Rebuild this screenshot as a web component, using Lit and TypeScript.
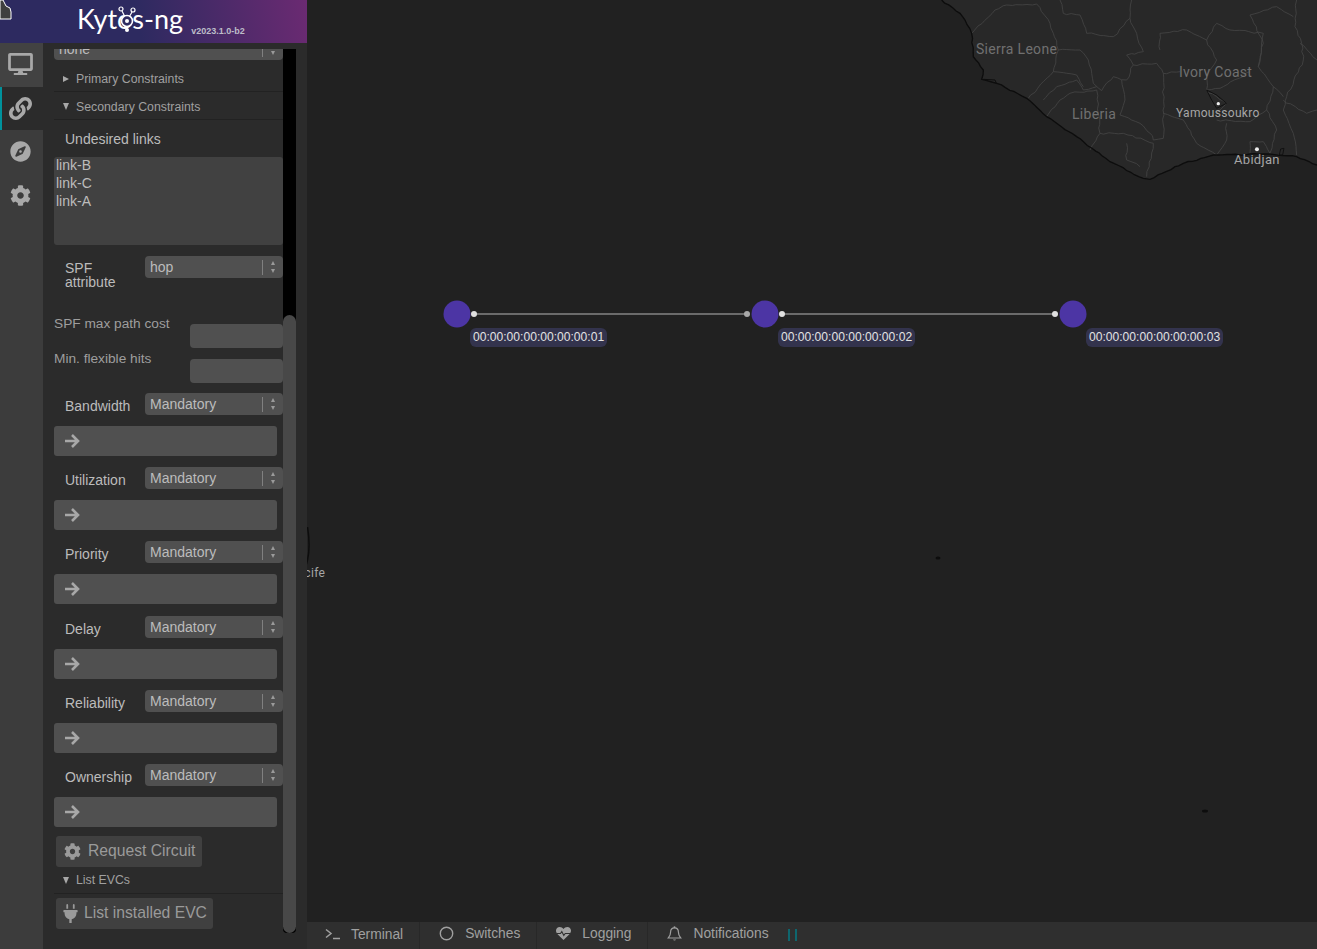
import { LitElement, html, svg, css } from "lit";
import { customElement } from "lit/decorators.js";

const ICONS = {
  desktop: {
    box: "0 0 576 512",
    d: "M528 0H48C21.5 0 0 21.5 0 48v320c0 26.5 21.5 48 48 48h192l-16 48h-72c-13.3 0-24 10.7-24 24s10.7 24 24 24h272c13.3 0 24-10.7 24-24s-10.7-24-24-24h-72l-16-48h192c26.5 0 48-21.5 48-48V48c0-26.5-21.5-48-48-48zm-16 352H64V64h448v288z",
  },
  link: {
    box: "0 0 512 512",
    d: "M326.612 185.391c59.747 59.809 58.927 155.698.36 214.59-.11.12-.24.25-.36.37l-67.2 67.2c-59.27 59.27-155.699 59.262-214.96 0-59.27-59.26-59.27-155.7 0-214.96l37.106-37.106c9.84-9.84 26.786-3.3 27.294 10.606.648 17.722 3.826 35.527 9.69 52.721 1.986 5.822.567 12.262-3.783 16.612l-13.087 13.087c-28.026 28.026-28.905 73.66-1.155 101.96 28.024 28.579 74.086 28.749 102.325.51l67.2-67.19c28.191-28.191 28.073-73.757 0-101.83-3.701-3.694-7.429-6.564-10.341-8.569a16.037 16.037 0 0 1-6.947-12.606c-.396-10.567 3.348-21.456 11.698-29.806l21.054-21.055c5.521-5.521 14.182-6.199 20.584-1.731a152.482 152.482 0 0 1 20.522 17.197zM467.547 44.449c-59.261-59.262-155.69-59.27-214.96 0l-67.2 67.2c-.12.12-.25.25-.36.37-58.566 58.892-59.387 154.781.36 214.59a152.454 152.454 0 0 0 20.521 17.196c6.402 4.468 15.064 3.789 20.584-1.731l21.054-21.055c8.35-8.35 12.094-19.239 11.698-29.806a16.037 16.037 0 0 0-6.947-12.606c-2.912-2.005-6.64-4.875-10.341-8.569-28.073-28.073-28.191-73.639 0-101.83l67.2-67.19c28.239-28.239 74.3-28.069 102.325.51 27.75 28.3 26.872 73.934-1.155 101.96l-13.087 13.087c-4.35 4.35-5.769 10.79-3.783 16.612 5.864 17.194 9.042 34.999 9.69 52.721.509 13.906 17.454 20.446 27.294 10.606l37.106-37.106c59.271-59.259 59.271-155.699.001-214.959z",
  },
  compass: {
    box: "0 0 496 512",
    d: "M225.38 233.37c-12.5 12.5-12.5 32.76 0 45.25 12.49 12.5 32.76 12.5 45.25 0 12.5-12.5 12.5-32.76 0-45.25-12.5-12.49-32.76-12.49-45.25 0zM248 8C111.03 8 0 119.03 0 256s111.03 248 248 248 248-111.03 248-248S384.97 8 248 8zm126.14 148.05L308.17 300.4a31.938 31.938 0 0 1-15.77 15.77l-144.34 65.97c-16.65 7.61-33.81-9.55-26.2-26.2l65.98-144.35a31.938 31.938 0 0 1 15.77-15.77l144.34-65.97c16.65-7.6 33.8 9.55 26.19 26.2z",
  },
  cog: {
    box: "0 0 512 512",
    d: "M487.4 315.7l-42.6-24.6c4.3-23.2 4.3-47 0-70.2l42.6-24.6c4.9-2.8 7.1-8.6 5.5-14-11.1-35.6-30-67.8-54.7-94.6-3.8-4.1-10-5.1-14.8-2.3L380.8 110c-17.9-15.4-38.5-27.3-60.8-35.1V25.8c0-5.6-3.9-10.5-9.4-11.7-36.7-8.2-74.3-7.8-109.2 0-5.5 1.2-9.4 6.1-9.4 11.7V75c-22.2 7.9-42.8 19.8-60.8 35.1L88.7 85.5c-4.9-2.8-11-1.9-14.8 2.3-24.7 26.7-43.6 58.9-54.7 94.6-1.7 5.4.6 11.2 5.5 14L67.3 221c-4.3 23.2-4.3 47 0 70.2l-42.6 24.6c-4.9 2.8-7.1 8.6-5.5 14 11.1 35.6 30 67.8 54.7 94.6 3.8 4.1 10 5.1 14.8 2.3l42.6-24.6c17.9 15.4 38.5 27.3 60.8 35.1v49.2c0 5.6 3.9 10.5 9.4 11.7 36.7 8.2 74.3 7.8 109.2 0 5.5-1.2 9.4-6.1 9.4-11.7v-49.2c22.2-7.9 42.8-19.8 60.8-35.1l42.6 24.6c4.9 2.8 11 1.9 14.8-2.3 24.7-26.7 43.6-58.9 54.7-94.6 1.5-5.5-.7-11.3-5.6-14.1zM256 336c-44.1 0-80-35.9-80-80s35.9-80 80-80 80 35.9 80 80-35.9 80-80 80z",
  },
  plug: {
    box: "0 0 384 512",
    d: "M256 24c0-13 11-24 24-24s24 11 24 24v104h-48zM80 24C80 11 91 0 104 0s24 11 24 24v104H80zM16 160h352c9 0 16 7 16 16v32c0 9-7 16-16 16h-16v32c0 77-55 142-128 157v99h-64v-99C87 398 32 333 32 256v-32H16c-9 0-16-7-16-16v-32c0-9 7-16 16-16z",
  },
};

const icon = (name: keyof typeof ICONS, cls = "") =>
  html`<svg class="ico ${cls}" viewBox=${ICONS[name].box}>
    <path d=${ICONS[name].d} fill="currentColor"></path>
  </svg>`;

const arrow = html`<svg class="arrow" viewBox="0 0 16 16">
  <path
    d="M1.5 8H14M8.5 2l6 6-6 6"
    fill="none"
    stroke="currentColor"
    stroke-width="2.6"
  ></path>
</svg>`;

const terminalIcon = html`<svg class="tab-ico" viewBox="0 0 15 15">
  <path
    d="M1 3.5 6 7.5 1 11.5M8 12.5h7"
    fill="none"
    stroke="currentColor"
    stroke-width="1.5"
  ></path>
</svg>`;

const circleIcon = html`<svg class="tab-ico" viewBox="0 0 15 15">
  <circle cx="7.5" cy="7.5" r="6.2" fill="none" stroke="currentColor" stroke-width="1.4"></circle>
</svg>`;

const heartIcon = html`<svg class="tab-ico" viewBox="0 0 15 15">
  <path
    d="M7.5 14 1.8 8.4C.3 6.9 0 5.8 0 4.6 0 2.5 1.6 1 3.7 1c1.6 0 3 .8 3.8 2.1C8.300 1.800 9.700 1 11.300 1 13.400 1 15 2.500 15 4.600c0 1.200-.3 2.300-1.800 3.800z"
    fill="currentColor"
  ></path>
  <path d="M1 7.500h3.500l1.300-2 2 4 1.400-2h4.800" fill="none" stroke="#2f2f2f" stroke-width="1.100"></path>
</svg>`;

const bellIcon = html`<svg class="tab-ico" viewBox="0 0 15 15">
  <path
    d="M7.500 1.800c-2.600 0-3.900 2-3.900 4.200 0 3.300-1 4.600-2.300 6h12.400c-1.300-1.400-2.300-2.700-2.300-6 0-2.200-1.300-4.200-3.900-4.200z"
    fill="none"
    stroke="currentColor"
    stroke-width="1.200"
  ></path>
  <circle cx="7.500" cy="1.200" r="1" fill="currentColor"></circle>
  <path d="M6 13.600a1.600 1.400 0 0 0 3 0" fill="currentColor"></path>
</svg>`;

const METRICS = [
  "Bandwidth",
  "Utilization",
  "Priority",
  "Delay",
  "Reliability",
  "Ownership",
];

const NODES = [
  { x: 150, y: 314, name: "00:00:00:00:00:00:00:01" },
  { x: 458, y: 314, name: "00:00:00:00:00:00:00:02" },
  { x: 766, y: 314, name: "00:00:00:00:00:00:00:03" },
];

const COAST =
  "M35 0 90 40 105 60 125 100 130 170 160 210 155 238 200 250 290 295 350 350 440 410 540 485 640 535 660 538 760 490 850 465 1000 462 1100 470 1161 495";

// traced off the map tiles, in 3x crop coordinates
const BORDERS = [
  "M125 100 195 30 230 15 320 12 360 70 370 100 385 150 450 150 475 180 490 250 515 272 550 230 590 240 610 195 590 165 640 155 620 100 600 55 605 0",
  "M385 150 370 215 340 245 295 295",
  "M610 195 680 190 700 220 700 415 670 420 660 400 630 370 570 345 585 300 575 240",
  "M1100 0 1095 80 1115 130 1120 180 1070 290 1060 330 1090 400 1100 465",
  "M700 220 750 215M960 45 1040 20 1090 50M960 45 1000 130 985 200 1030 260 1060 290",
  "M690 150 690 100 770 90 830 120 860 70 900 90 1000 100 985 200",
  "M830 120 860 180 830 225 830 270 880 260 960 215",
  "M830 270 860 290 890 310 860 340M700 340 760 360 800 430 860 465",
  "M860 360 960 365 1010 330 1030 260M1010 330 1040 390 1020 460",
  "M890 370 890 420 860 465M960 460 960 425 1000 425 1020 460",
  "M400 40 450 45 470 100 550 110 600 55M390 0 400 40",
  "M340 300 380 260 440 240 460 270 500 260M370 215 440 225 460 260",
  "M350 350 390 300 420 280 500 270 510 400 480 450",
  "M510 400 580 400 670 430 650 530M590 430 590 480 630 500",
  "M1060 300 1130 340 1161 330M1110 130 1161 180",
];

// borders on the tiles are wiggly, so break the long straight runs up a bit
function roughen(d: string, amount = 3) {
  let seed = 7;
  const rnd = () => {
    seed = (seed * 16807) % 2147483647;
    return (seed / 2147483647 - 0.5) * 2 * amount;
  };
  return d
    .split("M")
    .filter(Boolean)
    .map((part) => {
      const n = part.trim().split(/\s+/).map(Number);
      let out = `M${n[0]} ${n[1]}`;
      for (let i = 2; i + 1 < n.length; i += 2) {
        const dx = n[i] - n[i - 2];
        const dy = n[i + 1] - n[i - 1];
        const steps = Math.max(1, Math.round(Math.hypot(dx, dy) / 14));
        for (let s = 1; s <= steps; s++) {
          const t = s / steps;
          const j = s === steps ? 0 : 1;
          out += ` ${(n[i - 2] + dx * t + j * rnd()).toFixed(1)} ${(n[i - 1] + dy * t + j * rnd()).toFixed(1)}`;
        }
      }
      return out;
    })
    .join("");
}

@customElement("app-root")
export class AppRoot extends LitElement {
  static styles = css`
    :host {
      display: block;
      font-family: "Liberation Sans", Arial, sans-serif;
      color: #b4b4b4;
    }

    .page {
      display: grid;
      grid-template-columns: 307px 1fr;
      height: 949px;
      overflow: hidden;
      background: #212121;
    }

    .left {
      display: flex;
      flex-direction: column;
      min-height: 0;
      background: #2b2b2b;
    }

    .brand {
      position: relative;
      height: 43px;
      flex: none;
      display: flex;
      align-items: flex-start;
      padding-left: 77px;
      background: linear-gradient(80deg, #2d2a60 45%, #6b2a72 100%);
    }

    .logo {
      font-family: Lato, sans-serif;
      font-weight: 400;
      font-size: 27px;
      line-height: 38px;
      color: #fff;
    }

    .logo-nodes {
      position: absolute;
      left: 115px;
      top: 4px;
      width: 24px;
      height: 30px;
    }

    .version {
      font-size: 9px;
      font-weight: bold;
      color: #bdbdc8;
      margin: 26px 0 0 8px;
    }

    .cursor {
      position: absolute;
      left: 0;
      top: 0;
      width: 12px;
      height: 20px;
    }

    .left-body {
      flex: 1;
      display: flex;
      min-height: 0;
    }

    .rail {
      width: 43px;
      flex: none;
      background: #3c3c3c;
    }

    .rail-item {
      height: 44px;
      display: flex;
      align-items: center;
      justify-content: center;
      color: #a8a8a8;
      box-sizing: border-box;
      padding: 0 2px 2px 0;
    }

    .rail-item.shade {
      background: #424242;
    }

    .rail-item.active {
      background: #2b2b2b;
      border-left: 2px solid #00929c;
      padding: 0 4px 1px 0;
      height: 43px;
    }

    .ico {
      display: block;
    }

    .ico.big {
      width: 25px;
      height: 22px;
    }

    .ico.mid {
      width: 23px;
      height: 23px;
    }

    .ico.small {
      width: 21px;
      height: 21px;
    }

    .panel {
      flex: 1;
      display: flex;
      min-width: 0;
      padding: 6px 11px 16px 11px;
    }

    .scroll {
      flex: 1;
      min-width: 0;
      overflow: hidden;
    }

    .content {
      margin-top: -11px;
      display: flex;
      flex-direction: column;
    }

    .track {
      position: relative;
      width: 13px;
      flex: none;
      background: #000;
      border-radius: 0 0 4px 4px;
    }

    .thumb {
      position: absolute;
      left: 0;
      right: 0;
      top: 266px;
      bottom: 0;
      background: #484848;
      border-radius: 7px;
    }

    .select {
      position: relative;
      box-sizing: border-box;
      height: 22px;
      background: #505050;
      border-radius: 4px;
      padding: 1px 0 0 5px;
      font-size: 14px;
      line-height: 21px;
      color: #bcbcbc;
    }

    .select::before {
      content: "";
      position: absolute;
      right: 20px;
      top: 4px;
      height: 15px;
      width: 1px;
      background: #808080;
    }

    .select::after {
      content: "";
      position: absolute;
      right: 8px;
      top: 5px;
      border-left: 2.5px solid transparent;
      border-right: 2.5px solid transparent;
      border-bottom: 4px solid #9a9a9a;
    }

    .select .down {
      position: absolute;
      right: 8px;
      top: 13px;
      border-left: 2.5px solid transparent;
      border-right: 2.5px solid transparent;
      border-top: 4px solid #9a9a9a;
    }

    .fold {
      box-sizing: border-box;
      height: 28px;
      padding: 2px 0 0 9px;
      border-bottom: 1px solid #222;
      display: flex;
      align-items: center;
      font-size: 12.3px;
      color: #a0a0a0;
      gap: 6px;
    }

    .caret {
      width: 7px;
      display: flex;
    }

    .caret.closed {
      border-left: 6px solid #a8a8a8;
      border-top: 3.5px solid transparent;
      border-bottom: 3.5px solid transparent;
      width: 0;
      margin-right: 1px;
    }

    .caret.open {
      border-top: 7px solid #a8a8a8;
      border-left: 3.5px solid transparent;
      border-right: 3.5px solid transparent;
      width: 0;
      margin-right: 1px;
    }

    .fold.first {
      margin-top: 4px;
    }

    .fold.evcs {
      margin-top: -1px;
    }

    .label {
      font-size: 14px;
      color: #bcbcbc;
      padding-left: 11px;
    }

    .undesired {
      margin-top: 10px;
      line-height: 18px;
    }

    .list {
      box-sizing: border-box;
      height: 88px;
      margin-top: 9px;
      background: #414141;
      border-radius: 3px;
      padding-left: 2px;
      font-size: 14px;
      line-height: 18px;
      color: #bcbcbc;
    }

    .list div {
      margin-top: -1px;
    }

    .row {
      display: grid;
      grid-template-columns: 91px 1fr;
      align-items: start;
    }

    .spf {
      margin-top: 11px;
      height: 60px;
    }

    .spf .label {
      line-height: 14px;
      padding-top: 5px;
    }

    .plains {
      margin-bottom: 6.8px;
    }

    .plain {
      display: grid;
      grid-template-columns: 136px 1fr;
      align-items: start;
      font-size: 13.7px;
      color: #9e9e9e;
      height: 35px;
    }

    .plain span {
      line-height: 16px;
    }

    .plain i {
      display: block;
      height: 24px;
      background: #505050;
      border-radius: 4px;
      margin-top: 8px;
    }

    .metric {
      display: grid;
      grid-template-columns: 91px 1fr;
      align-items: start;
      height: 33px;
    }

    .metric .label {
      line-height: 18px;
      padding-top: 4px;
    }

    .range {
      box-sizing: border-box;
      width: 223px;
      height: 30px;
      margin-bottom: 11.3px;
      background: #505050;
      border-radius: 3px;
      display: flex;
      align-items: center;
      padding-left: 9px;
      color: #a8a8a8;
    }

    .arrow {
      width: 17px;
      height: 16px;
    }

    .btn {
      align-self: flex-start;
      box-sizing: border-box;
      height: 31px;
      margin-left: 2px;
      background: #404040;
      border-radius: 3px;
      display: flex;
      align-items: center;
      font-size: 15.7px;
      color: #9a9a9a;
    }

    .btn .ico {
      width: 17px;
      height: 17px;
    }

    .btn.request {
      margin-top: -3px;
      width: 146px;
      padding-left: 8px;
      gap: 7px;
    }

    .btn.installed {
      margin-top: 4px;
      width: 157px;
      padding-left: 6px;
      gap: 5px;
    }

    .btn.installed .ico {
      width: 17px;
      height: 19px;
    }

    .right {
      display: flex;
      flex-direction: column;
      min-width: 0;
    }

    .map {
      position: relative;
      flex: 1;
      overflow: hidden;
      background: #212121;
    }

    .tiles,
    .topology {
      position: absolute;
      left: 0;
      top: 0;
      width: 1010px;
      height: 922px;
    }

    .tiles {
      filter: blur(0.35px);
    }

    .place {
      position: absolute;
      font-family: Roboto, sans-serif;
      white-space: nowrap;
      letter-spacing: 0.3px;
    }

    .country {
      font-size: 14px;
      color: #707070;
    }

    .city {
      font-size: 12px;
      color: #a6a6a6;
    }

    .node-label {
      position: absolute;
      height: 19px;
      padding: 0 3px;
      border-radius: 6px;
      background: #33334d;
      color: #e2e2e2;
      font-size: 12.1px;
      line-height: 19px;
      white-space: nowrap;
    }

    .tabs {
      height: 27px;
      flex: none;
      display: flex;
      align-items: stretch;
      background: #2f2f2f;
    }

    .tab {
      display: flex;
      align-items: center;
      gap: 11px;
      padding: 0 16px 4px 19px;
      border-right: 1px solid #282828;
      font-size: 13.8px;
      color: #a0a0a0;
    }

    .tab.terminal {
      padding-left: 18px;
    }

    .tab.terminal span {
      padding-top: 2px;
    }

    .tab-ico {
      width: 15px;
      height: 15px;
      flex: none;
    }

    .tab.plainend {
      border-right: none;
    }

    .pause {
      display: flex;
      align-items: center;
      gap: 5px;
      margin-left: 3px;
      padding-bottom: 1px;
    }

    .pause i {
      display: block;
      width: 2px;
      height: 12px;
      background: #0e666e;
    }
  `;

  private renderSelect(value: string) {
    return html`<div class="select">${value}<span class="down"></span></div>`;
  }

  private renderPanel() {
    return html`<div class="panel">
      <div class="scroll">
        <div class="content">
          ${this.renderSelect("none")}
          <div class="fold first"><span class="caret closed"></span>Primary Constraints</div>
          <div class="fold"><span class="caret open"></span>Secondary Constraints</div>
          <div class="label undesired">Undesired links</div>
          <div class="list"><div>link-B<br />link-C<br />link-A</div></div>
          <div class="row spf">
            <div class="label">SPF<br />attribute</div>
            ${this.renderSelect("hop")}
          </div>
          <div class="plains">
            <div class="plain"><span>SPF max path cost</span><i></i></div>
            <div class="plain"><span>Min. flexible hits</span><i></i></div>
          </div>
          ${METRICS.map(
            (m) => html`<div class="metric">
                <div class="label">${m}</div>
                ${this.renderSelect("Mandatory")}
              </div>
              <div class="range">${arrow}</div>`
          )}
          <div class="btn request">${icon("cog")}Request Circuit</div>
          <div class="fold evcs"><span class="caret open"></span>List EVCs</div>
          <div class="btn installed">${icon("plug")}List installed EVC</div>
        </div>
      </div>
      <div class="track"><div class="thumb"></div></div>
    </div>`;
  }

  private renderTiles() {
    return html`<svg class="tiles" viewBox="307 0 1010 922">
      <g transform="translate(930 0) scale(0.3333)">
        <path d="${roughen(COAST, 2)}V0z" fill="#282828"></path>
        ${BORDERS.map(
          (d) => svg`<path d=${roughen(d)} fill="none" stroke="#454545" stroke-width="2.5"></path>`
        )}
        <path d=${roughen(COAST, 2)} fill="none" stroke="#0d0d0d" stroke-width="4"></path>
        <path d="M160 238 195 240 200 252" fill="none" stroke="#0d0d0d" stroke-width="3"></path>
        <path d="M830 270 860 285 890 310 860 325 845 300z" fill="none" stroke="#111" stroke-width="3"></path>
        <path d="M1048 465 1052 447 1062 445 1058 465z" fill="none" stroke="#111" stroke-width="3"></path>
        <circle cx="865" cy="311" r="5" fill="#eee"></circle>
        <circle cx="981" cy="448" r="6" fill="#eee"></circle>
      </g>
      <path d="M307.500 527c2 12 2 24 0 33l-1 4" fill="none" stroke="#0d0d0d" stroke-width="1.500"></path>
      <ellipse cx="938" cy="558" rx="2.500" ry="1.500" fill="#0d0d0d"></ellipse>
      <ellipse cx="1205" cy="811" rx="3" ry="1.500" fill="#0d0d0d"></ellipse>
    </svg>`;
  }

  private renderTopology() {
    return html`<svg class="topology" viewBox="0 0 1010 922">
      ${NODES.slice(0, -1).map(
        (n, i) => svg`<path d="M${n.x + 17} ${n.y}H${NODES[i + 1].x - 18}" stroke="#858585" stroke-width="1.600"></path>
          <circle cx=${n.x + 17} cy=${n.y} r="3" fill="#e0e0e0"></circle>
          <circle cx=${NODES[i + 1].x - 18} cy=${n.y} r="3" fill=${i === 0 ? "#a8a8a8" : "#e0e0e0"}></circle>`
      )}
      ${NODES.map(
        (n) => svg`<circle cx=${n.x} cy=${n.y} r="13.500" fill="#4c35a4"></circle>`
      )}
    </svg>`;
  }

  render() {
    return html`<div class="page">
      <div class="left">
        <div class="brand">
          <span class="logo">Kytos-ng</span>
          <svg class="logo-nodes" viewBox="0 0 24 30">
            <circle cx="12" cy="17" r="5.500" fill="#2f2b60" stroke="#fff" stroke-width="1.600"></circle>
            <circle cx="12" cy="17" r="2" fill="#fff"></circle>
            <circle cx="6" cy="5" r="2" fill="#2f2b60" stroke="#fff" stroke-width="1.200"></circle>
            <circle cx="18" cy="6" r="2" fill="#2f2b60" stroke="#fff" stroke-width="1.200"></circle>
            <circle cx="12" cy="26" r="2" fill="#fff"></circle>
            <path d="M7 7 9.500 12M17 8 14.500 12.500M12 22.500V25" stroke="#fff" stroke-width="1.200"></path>
          </svg>
          <span class="version">v2023.1.0-b2</span>
          <svg class="cursor" viewBox="0 0 12 20">
            <path d="M0 0H3L6 6 10 8 11 12V19H0z" fill="#3f3f3f" stroke="#fff" stroke-width="1"></path>
          </svg>
        </div>
        <div class="left-body">
          <nav class="rail">
            <div class="rail-item shade">${icon("desktop", "big")}</div>
            <div class="rail-item active">${icon("link", "mid")}</div>
            <div class="rail-item">${icon("compass", "small")}</div>
            <div class="rail-item">${icon("cog", "small")}</div>
          </nav>
          ${this.renderPanel()}
        </div>
      </div>
      <div class="right">
        <div class="map">
          ${this.renderTiles()} ${this.renderTopology()}
          <span class="place country" style="left:669px;top:41px">Sierra Leone</span>
          <span class="place country" style="left:872px;top:64px">Ivory Coast</span>
          <span class="place country" style="left:765px;top:106px">Liberia</span>
          <span class="place city" style="left:869px;top:106px">Yamoussoukro</span>
          <span class="place city" style="left:927px;top:152px;font-size:13px">Abidjan</span>
          <span class="place city" style="left:-17px;top:566px">Recife</span>
          ${NODES.map(
            (n) => html`<span class="node-label" style="left:${n.x + 13}px;top:${n.y + 14}px"
              >${n.name}</span
            >`
          )}
        </div>
        <div class="tabs">
          <div class="tab terminal">${terminalIcon}<span>Terminal</span></div>
          <div class="tab">${circleIcon}<span>Switches</span></div>
          <div class="tab">${heartIcon}<span>Logging</span></div>
          <div class="tab plainend">${bellIcon}<span>Notifications</span></div>
          <div class="pause"><i></i><i></i></div>
        </div>
      </div>
    </div>`;
  }
}
